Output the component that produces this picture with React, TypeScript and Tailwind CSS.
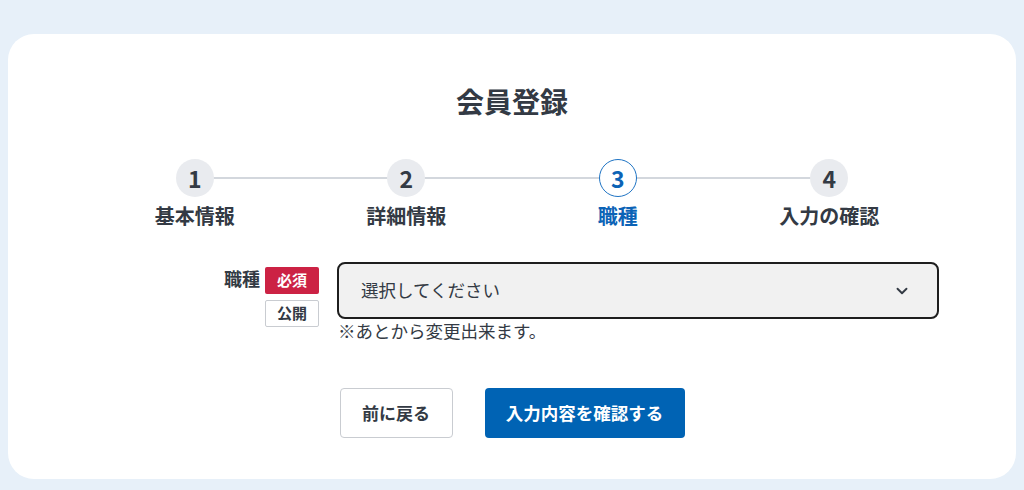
import { ChevronDown } from "lucide-react";

const steps = ["基本情報", "詳細情報", "職種", "入力の確認"];
const current = 3;

const Stepper = () => (
  <div className="flex w-[846px] mx-auto">
    {steps.map((label, i) => {
      const n = i + 1;
      const active = n === current;
      return (
        <div key={label} className="relative flex-1 flex flex-col items-center">
          {i < steps.length - 1 && (
            <div className="absolute top-[18px] left-1/2 w-full h-[2px] bg-[#d3d7dd]" />
          )}
          <div
            className={
              active
                ? "relative z-10 w-[38px] h-[38px] rounded-full bg-white border-[1.5px] border-[#1f74c4] text-[#0c63b6] flex items-center justify-center text-[23px] font-bold"
                : "relative z-10 w-[38px] h-[38px] rounded-full bg-[#e9ebef] text-[#333a44] flex items-center justify-center text-[23px] font-bold"
            }
          >
            {n}
          </div>
          <div
            className={
              active
                ? "mt-[5px] text-[20px] font-bold leading-[28px] text-[#0c63b6]"
                : "mt-[5px] text-[20px] font-bold leading-[28px] text-[#333a44]"
            }
          >
            {label}
          </div>
        </div>
      );
    })}
  </div>
);

export default function App() {
  return (
    <div
      className="min-h-[490px] bg-[#e7f0f9] px-2 pt-[34px] pb-[11px] text-[#333a44]"
      style={{ fontFamily: '"Noto Sans CJK JP", "Noto Sans", sans-serif' }}
    >
      <div className="bg-white rounded-[26px] h-[445px] pt-[47px]">
        <h1 className="text-center text-[28px] font-bold leading-[40px]">会員登録</h1>

        <div className="mt-[38px]">
          <Stepper />
        </div>

        <div className="mt-[32px] flex w-[854px] mx-auto gap-[18px]">
          <div className="w-[234px] flex justify-end gap-[5px] pt-[5px]">
            <div className="text-[18px] font-bold leading-[26px] -mt-[2px]">職種</div>
            <div className="flex flex-col gap-[6px]">
              <span className="w-[54px] h-[27px] bg-[#cc2244] text-white text-[15px] font-bold flex items-center justify-center rounded-[2px]">
                必須
              </span>
              <span className="w-[54px] h-[27px] bg-white border border-[#c9ccd1] text-[15px] font-bold flex items-center justify-center rounded-[2px]">
                公開
              </span>
            </div>
          </div>
          <div className="flex-1">
            <button className="w-full h-[57px] bg-[#f1f1f1] border-2 border-[#1e1e1e] rounded-[8px] flex items-center justify-between pl-[22px] pr-[26px] text-[17.5px] text-[#333a44]">
              <span>選択してください</span>
              <ChevronDown className="w-[18px] h-[18px]" strokeWidth={2.5} />
            </button>
            <p className="pl-[1px] text-[17.5px] leading-[24px]">※あとから変更出来ます。</p>
          </div>
        </div>

        <div className="mt-[45px] flex justify-center gap-[32px]">
          <button className="w-[113px] h-[50px] bg-white border border-[#c9ccd1] rounded-[4px] text-[17px] font-bold">
            前に戻る
          </button>
          <button className="w-[200px] h-[50px] bg-[#0063b4] rounded-[4px] text-white text-[17.5px] font-bold">
            入力内容を確認する
          </button>
        </div>
      </div>
    </div>
  );
}
